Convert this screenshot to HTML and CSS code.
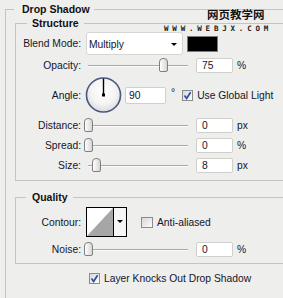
FILE: index.html
```html
<!DOCTYPE html>
<html>
<head>
<meta charset="utf-8">
<link rel="stylesheet" href="styles.css">
</head>
<body>
<div class="wm">
  <div class="wm-cn">网页教学网</div>
  <div class="wm-en">WWW.WEBJX.COM</div>
</div>
<fieldset class="group outer">
  <legend>Drop Shadow</legend>
  <div class="outer-body">
    <fieldset class="group sub structure">
      <legend>Structure</legend>
      <div class="row r-blend">
        <span class="label">Blend Mode:</span>
        <div class="select"><span>Multiply</span><span class="arrow"></span></div>
        <div class="swatch"></div>
      </div>
      <div class="row r-slider r-opacity">
        <span class="label">Opacity:</span>
        <div class="slider"><div class="track"></div><div class="thumb" style="left:75px"></div></div>
        <div class="num">75</div><span class="unit">%</span>
      </div>
      <div class="row r-angle">
        <span class="label">Angle:</span>
        <svg class="dial" width="37" height="36" viewBox="0 0 37 36">
          <defs>
            <radialGradient id="dg" cx="50%" cy="40%" r="60%">
              <stop offset="0" stop-color="#ffffff"/>
              <stop offset="0.6" stop-color="#f4f4f4"/>
              <stop offset="1" stop-color="#dcdcdc"/>
            </radialGradient>
          </defs>
          <circle cx="18.5" cy="18" r="17" fill="url(#dg)" stroke="#4a5684" stroke-width="1.6"/>
          <line x1="18.5" y1="18" x2="18.5" y2="1.5" stroke="#000" stroke-width="1.4"/>
          <rect x="17" y="16.5" width="3" height="3" fill="#000"/>
        </svg>
        <div class="num num-angle">90</div>
        <span class="deg">°</span>
        <svg class="check check-global" width="11" height="11" viewBox="0 0 11 11">
          <defs>
            <linearGradient id="cg" x1="0" y1="0" x2="1" y2="1">
              <stop offset="0" stop-color="#d8d8d8"/>
              <stop offset="1" stop-color="#ffffff"/>
            </linearGradient>
          </defs>
          <rect x="0.5" y="0.5" width="10" height="10" fill="url(#cg)" stroke="#8c8c8c"/>
          <path d="M2.5 5.5 L4.6 8.4 L8.6 2.2" fill="none" stroke="#2d4c9e" stroke-width="1.7"/>
        </svg>
        <span class="cb-text">Use Global Light</span>
      </div>
      <div class="row r-slider r-distance">
        <span class="label">Distance:</span>
        <div class="slider"><div class="track"></div><div class="thumb" style="left:0px"></div></div>
        <div class="num">0</div><span class="unit">px</span>
      </div>
      <div class="row r-slider r-spread">
        <span class="label">Spread:</span>
        <div class="slider"><div class="track"></div><div class="thumb" style="left:0px"></div></div>
        <div class="num">0</div><span class="unit">%</span>
      </div>
      <div class="row r-slider r-size">
        <span class="label">Size:</span>
        <div class="slider"><div class="track"></div><div class="thumb" style="left:8px"></div></div>
        <div class="num">8</div><span class="unit">px</span>
      </div>
    </fieldset>

    <fieldset class="group sub quality">
      <legend>Quality</legend>
      <div class="row r-contour">
        <span class="label">Contour:</span>
        <div class="contour">
          <svg class="contour-preview" width="26" height="28" viewBox="0 0 26 28">
            <rect width="26" height="28" fill="#fff"/>
            <polygon points="0,28 26,0 26,28" fill="#a6a6a6"/>
          </svg>
          <div class="contour-drop"><span class="arrow"></span></div>
        </div>
        <svg class="check check-aa" width="12" height="11" viewBox="0 0 12 11">
          <defs>
            <linearGradient id="cg2" x1="0" y1="0" x2="1" y2="1">
              <stop offset="0" stop-color="#d4d4d4"/>
              <stop offset="1" stop-color="#ffffff"/>
            </linearGradient>
          </defs>
          <rect x="0.5" y="0.5" width="11" height="10" fill="url(#cg2)" stroke="#8c8c8c"/>
        </svg>
        <span class="cb-text">Anti-aliased</span>
      </div>
      <div class="row r-slider r-noise">
        <span class="label">Noise:</span>
        <div class="slider"><div class="track"></div><div class="thumb" style="left:0px"></div></div>
        <div class="num">0</div><span class="unit">%</span>
      </div>
    </fieldset>

    <div class="row r-knock">
      <svg class="check" width="11" height="11" viewBox="0 0 11 11">
        <rect x="0.5" y="0.5" width="10" height="10" fill="url(#cg)" stroke="#8c8c8c"/>
        <path d="M2.5 5.5 L4.6 8.4 L8.6 2.2" fill="none" stroke="#2d4c9e" stroke-width="1.7"/>
      </svg>
      <span class="cb-text">Layer Knocks Out Drop Shadow</span>
    </div>
  </div>
</fieldset>
</body>
</html>
```
FILE: styles.css
```css
html, body {
  margin: 0;
  padding: 0;
}
body {
  width: 283px;
  height: 298px;
  overflow: hidden;
  position: relative;
  background: #eeeeec;
  font-family: "Liberation Sans", Arial, sans-serif;
  font-size: 10.3px;
  color: #15152a;
}

/* watermark overlay */
.wm {
  position: absolute;
  top: 8px;
  left: 164px;
  width: 116px;
}
.wm-cn {
  font-family: "Noto Sans CJK SC", sans-serif;
  font-weight: bold;
  font-size: 11.5px;
  line-height: 13px;
  color: #111;
  margin-left: 43px;
  text-shadow: 0 0 1px #fff, 0 0 1px #fff;
}
.wm-en {
  font-family: "DejaVu Sans Mono", monospace;
  font-weight: bold;
  font-size: 7.5px;
  line-height: 9px;
  letter-spacing: 3.8px;
  color: #222;
  margin-top: 3px;
  white-space: nowrap;
}

/* group boxes */
.group {
  border: 1px solid #c4c4c0;
  border-right: 0;
  margin: 0;
  padding: 0;
  min-width: 0;
}
.group > legend {
  font-weight: bold;
  font-size: 10.5px;
  line-height: 13px;
  color: #111;
}
.outer {
  margin: 3px 0 0 5px;
  width: 278px;
  height: 295px;
  box-sizing: border-box;
  border-bottom: 0;
}
.outer > legend {
  margin-left: 8px;
  padding: 0 4px 0 8px;
}
.outer-body {
  padding-left: 9px;
}
.sub > legend {
  margin-left: 11px;
  padding: 0 5px 0 5px;
}
.structure {
  margin-top: 1px;
  padding-bottom: 6px;
}
.quality {
  margin-top: 10px;
  padding-bottom: 5px;
}
.quality > legend {
  margin-left: 10px;
  padding: 0 5px 0 6px;
}

/* rows */
.row {
  display: flex;
  align-items: center;
}
.label {
  flex: none;
  width: 65px;
  text-align: right;
}
.r-blend { margin-top: 2px; height: 23px; }
.r-opacity { margin-top: 2px; }
.r-angle { margin-top: 3px; height: 36px; }
.r-distance { margin-top: 4px; }
.r-spread { margin-top: 3px; }
.r-size { margin-top: 3px; }
.r-slider { height: 17px; }
.r-contour { margin-top: 3px; height: 30px; }
.r-noise { margin-top: 4px; }
.r-knock { margin-top: 9px; height: 11px; padding-left: 74px; }

/* blend mode select */
.select {
  margin-left: 5px;
  width: 97px;
  height: 23px;
  box-sizing: border-box;
  background: #fff;
  border: 1px solid #d6d6d2;
  border-radius: 3px;
  display: flex;
  align-items: center;
  justify-content: space-between;
  padding: 1px 5px 0 2px;
  flex: none;
}
.arrow {
  width: 0;
  height: 0;
  border-left: 3px solid transparent;
  border-right: 3px solid transparent;
  border-top: 3px solid #000;
}
.swatch {
  margin-left: 4px;
  width: 31px;
  height: 16px;
  box-sizing: border-box;
  background: #000;
  border: 1px solid #7a7a7a;
  flex: none;
}

/* sliders */
.slider {
  position: relative;
  margin-left: 3px;
  width: 108px;
  height: 17px;
  flex: none;
}
.track {
  position: absolute;
  left: 4px;
  top: 8px;
  width: 100px;
  height: 0;
  border-top: 1px solid #a9a9a6;
  border-bottom: 1px solid #fdfdfd;
}
.thumb {
  position: absolute;
  top: 1px;
  width: 9px;
  height: 14px;
  box-sizing: border-box;
  border: 1px solid #7f7f7f;
  border-radius: 4px 4px 2px 2px;
  background: linear-gradient(to right, #ffffff, #d6d6d6);
}
.num {
  margin-left: 4px;
  width: 37px;
  height: 15px;
  box-sizing: border-box;
  background: #fff;
  border: 1px solid #cfcfcb;
  border-radius: 2px;
  padding: 1px 0 0 5px;
  line-height: 12px;
  flex: none;
}
.unit {
  margin-left: 4px;
}

/* angle */
.dial {
  margin-left: 4px;
  flex: none;
}
.num-angle {
  margin-left: 3px;
  width: 41px;
  height: 17px;
  padding: 2px 0 0 3px;
}
.deg {
  margin-left: 5px;
  align-self: flex-start;
  margin-top: 11px;
  line-height: 10px;
}
.check {
  flex: none;
  display: block;
}
.check-global {
  margin-left: 7px;
}
.cb-text {
  margin-left: 4px;
  white-space: nowrap;
}

/* contour */
.contour {
  margin-left: 5px;
  width: 41px;
  height: 30px;
  box-sizing: border-box;
  border: 1px solid #000;
  display: flex;
  flex: none;
}
.contour-preview {
  display: block;
  flex: none;
}
.contour-drop {
  flex: none;
  width: 12px;
  border-left: 1px solid #000;
  background: #f6f6f6;
  display: flex;
  justify-content: center;
  align-items: flex-start;
  padding-top: 12px;
  box-sizing: border-box;
}
.check-aa {
  margin-left: 14px;
}
```
